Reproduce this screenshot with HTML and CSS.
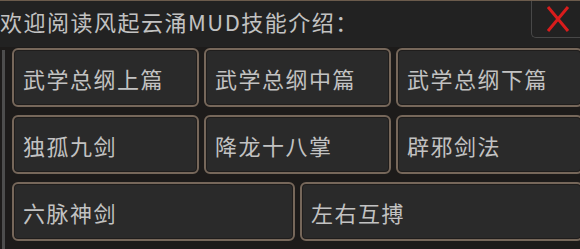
FILE: index.html
```html
<!DOCTYPE html>
<html lang="zh-CN">
<head>
    <meta charset="UTF-8">
    <meta name="viewport" content="width=device-width, initial-scale=1.0">
    <title>风起云涌MUD技能介绍</title>
    <link rel="stylesheet" href="styles.css">
</head>
<body>

    <div class="panel">
        <!-- Title bar -->
        <div class="header">
            <div class="title">欢迎阅读风起云涌MUD技能介绍：</div>
            <div class="close-button">
                <svg width="24" height="26" viewBox="0 0 24 26">
                    <path d="M2 1 L22 25 M22 1 L2 25" stroke="#d81c1c" stroke-width="3" fill="none"/>
                </svg>
            </div>
        </div>

        <!-- Skill list -->
        <div class="content">
            <div class="side-bar"></div>
            <div class="skills">
                <div class="skill third">武学总纲上篇</div>
                <div class="skill third">武学总纲中篇</div>
                <div class="skill third">武学总纲下篇</div>
                <div class="skill third">独孤九剑</div>
                <div class="skill third">降龙十八掌</div>
                <div class="skill third">辟邪剑法</div>
                <div class="skill half">六脉神剑</div>
                <div class="skill half">左右互搏</div>
            </div>
        </div>
    </div>

</body>
</html>
```

FILE: styles.css
```css
body {
    margin: 0;
    background: #1d1b1a;
    font-family: "Noto Sans CJK SC", "Noto Sans", sans-serif;
    color: #c2c2c2;
    overflow: hidden;
}
.panel {
    width: 580px;
    height: 249px;
    overflow: hidden;
}
.header {
    display: flex;
    justify-content: space-between;
    align-items: flex-start;
    height: 46px;
    background: #222222;
    border-top: 1px solid #6b5b4c;
}
.title {
    font-size: 22px;
    letter-spacing: 1.5px;
    line-height: 40px;
    white-space: nowrap;
}
.close-button {
    box-sizing: border-box;
    width: 49px;
    height: 37px;
    border-left: 1px solid #484848;
    border-bottom: 1px solid #484848;
    border-bottom-left-radius: 5px;
    display: flex;
    justify-content: center;
    align-items: center;
    padding-left: 3px;
    flex-shrink: 0;
}
.content {
    display: flex;
}
.side-bar {
    width: 3px;
    margin-left: 2px;
    margin-top: 3px;
    height: 200px;
    background: #4d4d4d;
    flex-shrink: 0;
}
.skills {
    display: grid;
    grid-template-columns: repeat(6, 91px);
    grid-auto-rows: 59px;
    column-gap: 5px;
    row-gap: 8px;
    margin-left: 7px;
    margin-top: 1px;
    flex-shrink: 0;
}
.skill {
    box-sizing: border-box;
    background: #2a2a2a;
    border: 2px solid #76675a;
    border-radius: 6px;
    box-shadow: inset 0 0 0 1px #1f1d1c;
    display: flex;
    align-items: center;
    padding-left: 9px;
    font-size: 22px;
    letter-spacing: 1.5px;
    white-space: nowrap;
}
.third {
    grid-column: span 2;
}
.half {
    grid-column: span 3;
}
```
